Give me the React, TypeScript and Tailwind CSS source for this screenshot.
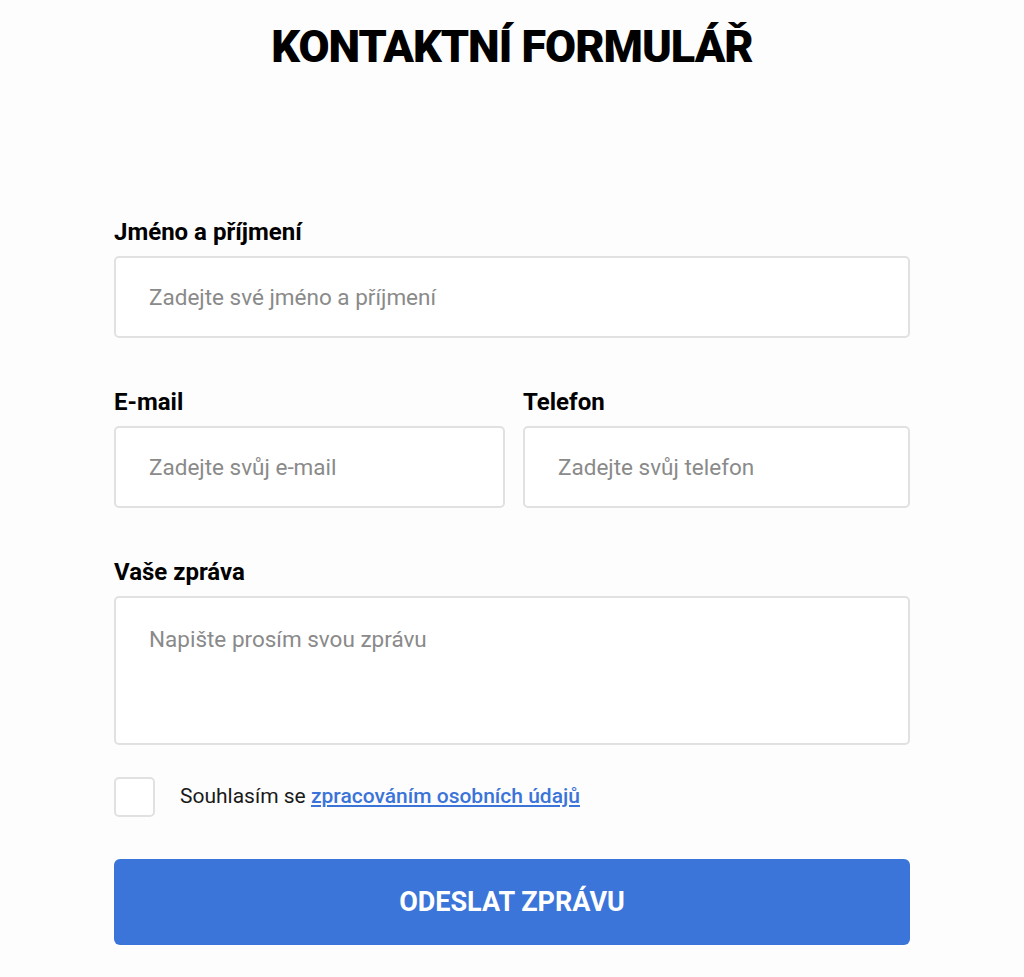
export default function App() {
	return (
		<div className="min-h-[977px] w-full bg-[#fdfdfd] font-['Roboto',sans-serif] text-black">
			<h1 className="pt-[21px] text-center text-[45px] leading-[52px] font-black tracking-[-1px]">
				KONTAKTNÍ FORMULÁŘ
			</h1>

			<form className="mx-auto mt-[145px] flex w-[796px] flex-col">
				<label className="text-[24px] leading-[28px] font-bold">Jméno a příjmení</label>
				<input
					type="text"
					placeholder="Zadejte své jméno a příjmení"
					className="mt-[10px] h-[82px] rounded-[5px] border-2 border-[#e1e1e1] bg-white px-[33px] text-[22.5px] placeholder:text-[#8a8a8a] outline-none"
				/>

				<div className="mt-[50px] grid grid-cols-[391px_1fr] gap-[18px]">
					<div className="flex flex-col">
						<label className="text-[24px] leading-[28px] font-bold">E-mail</label>
						<input
							type="email"
							placeholder="Zadejte svůj e-mail"
							className="mt-[10px] h-[82px] w-full rounded-[5px] border-2 border-[#e1e1e1] bg-white px-[33px] text-[22.5px] placeholder:text-[#8a8a8a] outline-none"
						/>
					</div>
					<div className="flex flex-col">
						<label className="text-[24px] leading-[28px] font-bold">Telefon</label>
						<input
							type="tel"
							placeholder="Zadejte svůj telefon"
							className="mt-[10px] h-[82px] w-full rounded-[5px] border-2 border-[#e1e1e1] bg-white px-[33px] text-[22.5px] placeholder:text-[#8a8a8a] outline-none"
						/>
					</div>
				</div>

				<label className="mt-[50px] text-[24px] leading-[28px] font-bold">Vaše zpráva</label>
				<textarea
					placeholder="Napište prosím svou zprávu"
					className="mt-[10px] h-[149px] resize-none rounded-[5px] border-2 border-[#e1e1e1] bg-white px-[33px] pt-[27px] text-[22.5px] leading-[28px] placeholder:text-[#8a8a8a] outline-none"
				/>

				<div className="mt-[32px] flex items-center gap-[25px]">
					<span className="h-[40px] w-[41px] shrink-0 rounded-[5px] border-2 border-[#e1e1e1] bg-white" />
					<span className="text-[21px] text-[#1a1a1a]">
						Souhlasím se{" "}
						<a href="#" className="font-medium text-[#3b74d8] underline underline-offset-2">
							zpracováním osobních údajů
						</a>
					</span>
				</div>

				<button
					type="button"
					className="mt-[42px] h-[86px] rounded-[6px] bg-[#3b75d9] text-[27px] font-bold text-white"
				>
					ODESLAT ZPRÁVU
				</button>
			</form>
		</div>
	);
}
